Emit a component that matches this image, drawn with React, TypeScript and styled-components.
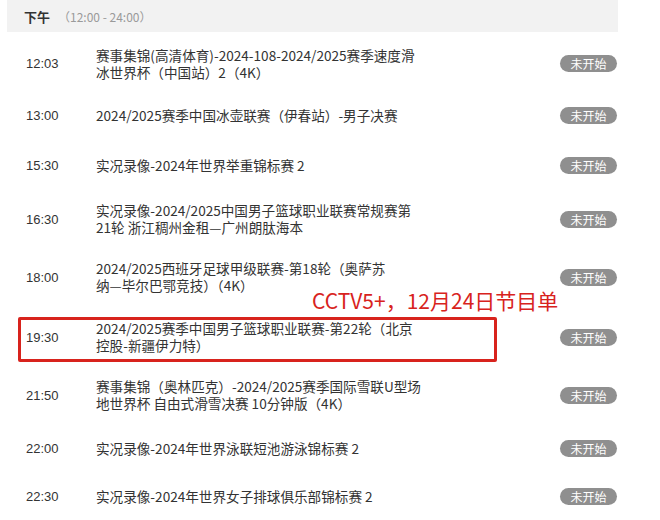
import React from "react";
import styled, { createGlobalStyle } from "styled-components";

const Global = createGlobalStyle`
  html, body { margin: 0; padding: 0; background: #ffffff; }
  body { font-family: "Noto Sans CJK SC", "Noto Sans", sans-serif; color: #333; }
`;

const Page = styled.div`
  width: 611px;
  margin-left: 7px;
`;

const Header = styled.div`
  height: 32px;
  background: #f2f2f2;
  display: flex;
  align-items: center;
  padding-left: 17px;
`;

const Title = styled.span`
  font-size: 13px;
  font-weight: 700;
  color: #333;
`;

const Range = styled.span`
  font-size: 12px;
  color: #9a9a9a;
  margin-left: 8px;
`;

const List = styled.div`
  margin-top: 5px;
  display: flex;
  flex-direction: column;
`;

const Row = styled.div<{ $h: number }>`
  position: relative;
  height: ${(p) => p.$h}px;
  display: grid;
  grid-template-columns: 70px 1fr 58px;
  align-items: center;
  padding-left: 19px;
`;

const Time = styled.div`
  font-family: "Liberation Sans", Arial, sans-serif;
  font-size: 13px;
  color: #333;
`;

const Desc = styled.div`
  font-size: 13.6px;
  line-height: 17px;
  color: #333;
  white-space: nowrap;
`;

const Badge = styled.div`
  width: 57px;
  height: 17px;
  border-radius: 9px;
  background: #8f8f8f;
  color: #fff;
  font-size: 12px;
  display: flex;
  align-items: center;
  justify-content: center;
`;

const Frame = styled.div`
  position: absolute;
  left: 11px;
  right: 121px;
  top: 10px;
  bottom: 5px;
  border: 3px solid #d8231d;
  border-radius: 2px;
  pointer-events: none;
`;

const Note = styled.div`
  position: absolute;
  left: 305px;
  top: -19px;
  font-size: 21px;
  line-height: 25px;
  color: #d8231d;
  white-space: nowrap;
`;

type Item = { time: string; lines: string[]; h: number; highlight?: boolean };

const items: Item[] = [
  { time: "12:03", lines: ["赛事集锦(高清体育)-2024-108-2024/2025赛季速度滑", "冰世界杯（中国站）2（4K）"], h: 53 },
  { time: "13:00", lines: ["2024/2025赛季中国冰壶联赛（伊春站）-男子决赛"], h: 50 },
  { time: "15:30", lines: ["实况录像-2024年世界举重锦标赛 2"], h: 51 },
  { time: "16:30", lines: ["实况录像-2024/2025中国男子篮球职业联赛常规赛第", "21轮 浙江稠州金租—广州朗肽海本"], h: 56 },
  { time: "18:00", lines: ["2024/2025西班牙足球甲级联赛-第18轮（奥萨苏", "纳—毕尔巴鄂竞技）（4K）"], h: 60 },
  { time: "19:30", lines: ["2024/2025赛季中国男子篮球职业联赛-第22轮（北京", "控股-新疆伊力特）"], h: 60, highlight: true },
  { time: "21:50", lines: ["赛事集锦（奥林匹克）-2024/2025赛季国际雪联U型场", "地世界杯 自由式滑雪决赛 10分钟版（4K）"], h: 56 },
  { time: "22:00", lines: ["实况录像-2024年世界泳联短池游泳锦标赛 2"], h: 50 },
  { time: "22:30", lines: ["实况录像-2024年世界女子排球俱乐部锦标赛 2"], h: 47 },
];

export default function App() {
  return (
    <>
      <Global />
      <Page>
        <Header>
          <Title>下午</Title>
          <Range>（12:00 - 24:00）</Range>
        </Header>
        <List>
          {items.map((it) => (
            <Row key={it.time} $h={it.h}>
              <Time>{it.time}</Time>
              <Desc>
                {it.lines.map((l, i) => (
                  <div key={i}>{l}</div>
                ))}
              </Desc>
              <Badge>未开始</Badge>
              {it.highlight && (
                <>
                  <Frame />
                  <Note>CCTV5+，12月24日节目单</Note>
                </>
              )}
            </Row>
          ))}
        </List>
      </Page>
    </>
  );
}
